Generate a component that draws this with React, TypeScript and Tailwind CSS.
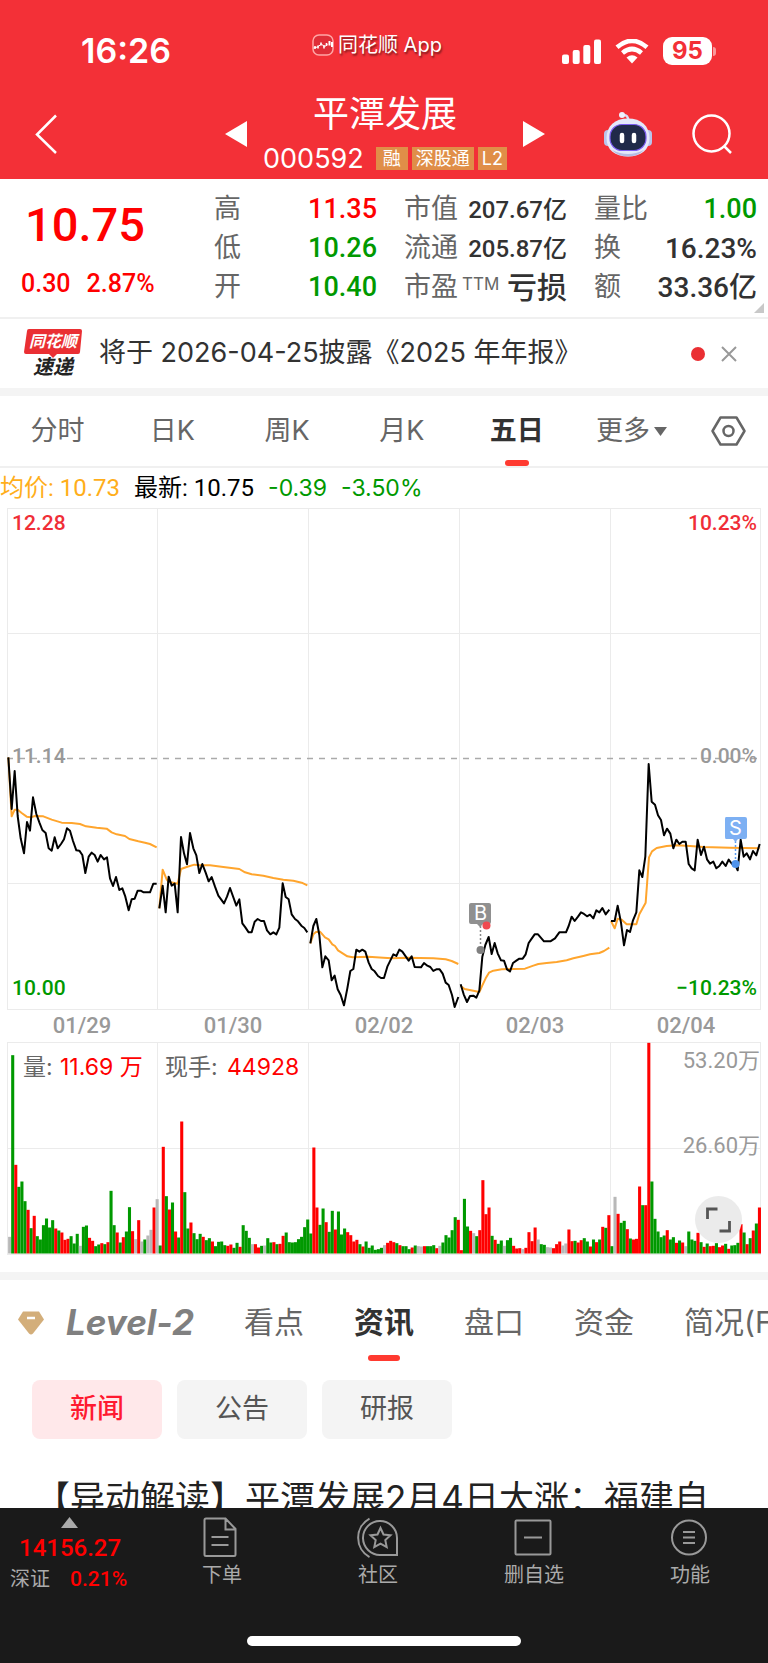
import React, { useState } from 'react';

interface Stat {
  label: string;
  sup?: string;
  value: string;
  className: string;
}

const STATS: Stat[][] = [
  [
    { label: '高', value: '11.35', className: 'text-[27px] text-[#ff0000]' },
    { label: '低', value: '10.26', className: 'text-[27px] text-[#009900]' },
    { label: '开', value: '10.40', className: 'text-[27px] text-[#009900]' },
  ],
  [
    { label: '市值', value: '207.67亿', className: 'text-[24px] text-[#323232]' },
    { label: '流通', value: '205.87亿', className: 'text-[24px] text-[#323232]' },
    { label: '市盈', sup: 'TTM', value: '亏损', className: 'text-[30px] text-[#323232]' },
  ],
  [
    { label: '量比', value: '1.00', className: 'text-[27px] text-[#009900]' },
    { label: '换', value: '16.23%', className: 'text-[28px] text-[#323232]' },
    { label: '额', value: '33.36亿', className: 'text-[28px] text-[#323232]' },
  ],
];

const PERIODS = ['分时', '日K', '周K', '月K', '五日', '更多'];
const SECTIONS = ['看点', '资讯', '盘口', '资金', '简况(F10)'];
const CHIPS = ['新闻', '公告', '研报'];
const DATES = ['01/29', '01/30', '02/02', '02/03', '02/04'];
const COLS = [7.5, 157.5, 308.5, 459.5, 610.5, 760.5];

// one entry per trading day, drawn at three units per pixel
const DAYS = [
  {
    x: 0,
    price:
      '25,52 35,207 44,93 53,228 62,295 72,340 81,246 90,272 99,172 109,222 118,247 127,270 137,279 146,325 155,332 164,292 173,325 183,312 192,298 201,265 210,272 219,303 229,331 238,332 247,345 256,399 266,350 275,338 284,345 293,365 302,345 312,358 321,352 330,415 339,438 348,411 358,450 367,445 376,470 386,511 395,478 404,476 413,452 422,452 431,457 450,457 460,431 470,431',
    avg: '25,52 35,229 44,209 53,209 65,219 80,230 92,232 105,228 130,229 155,239 185,248 215,249 240,252 258,259 290,263 320,266 335,277 350,283 375,288 388,297 415,304 435,308 450,312 470,322',
  },
  {
    x: 0,
    price:
      '478,505 488,437 497,517 506,410 515,437 524,431 533,517 543,291 552,340 561,373 570,279 580,325 589,346 598,399 607,372 617,398 626,424 635,411 645,440 655,467 672,490 681,470 690,444 709,497 718,478 727,550 736,562 746,577 755,577 764,545 773,537 783,543 792,543 801,571 811,583 820,577 829,583 838,563 848,430 857,471 866,478 875,523 885,537 894,544 904,557 913,564 922,577',
    avg: '478,505 488,389 500,418 506,426 520,428 533,431 543,387 560,381 583,374 600,376 630,376 670,381 718,387 735,397 755,403 790,407 820,414 850,419 880,422 905,428 922,436',
  },
  {
    x: 300,
    price:
      '31,610 40,558 49,537 58,585 67,682 76,649 86,661 95,721 104,707 113,748 122,765 132,796 142,745 151,693 160,687 169,629 178,635 187,629 196,635 206,668 215,687 224,694 234,708 243,714 252,714 262,680 280,643 289,648 298,629 307,635 326,662 335,649 344,681 363,682 372,669 382,677 391,681 400,693 409,688 419,688 428,701 437,728 446,735 456,765 464,801 475,771',
    avg: '31,610 40,583 48,576 60,575 75,592 86,598 97,613 105,618 114,631 142,649 158,652 205,650 250,653 275,655 320,653 400,655 437,658 455,663 475,672',
  },
  {
    x: 300,
    price:
      '482,733 491,763 501,786 510,768 520,767 529,773 538,752 547,650 556,615 566,591 575,642 584,609 593,640 603,661 612,662 621,688 630,694 639,669 649,662 658,656 668,656 677,643 686,609 695,596 704,583 714,583 732,604 751,604 765,595 778,577 798,577 806,558 815,530 824,543 834,530 843,517 852,522 861,529 870,524 880,535 889,511 898,517 907,504 917,523 928,509',
    avg: '482,738 494,747 520,752 538,756 547,736 557,715 567,698 580,692 605,688 640,687 675,686 700,677 715,672 740,669 770,666 800,661 820,655 850,648 870,643 898,639 912,633 928,623',
  },
  {
    x: 530,
    price:
      '243,543 254,543 263,497 273,548 282,616 291,570 300,576 309,541 319,517 328,391 337,411 346,350 356,72 365,185 375,194 384,226 393,240 402,286 411,266 421,281 430,325 439,299 448,312 457,305 467,305 476,372 485,385 494,391 503,299 513,345 522,320 531,358 540,371 550,365 559,385 568,378 577,365 587,378 596,359 606,372 614,371 623,391 632,299 641,350 650,340 660,358 669,333 679,346 689,312',
    avg: '243,543 254,565 263,536 275,539 290,553 319,553 328,523 347,488 352,420 357,352 366,334 380,324 410,318 440,316 480,318 520,321 600,323 689,325',
  },
];

// traded volume per 5 minutes: r = up, g = down, x = flat
const VOLUME = `
x50 g595 r266 g200 g216 g157 r131 g76 r113 g52 g42 g85 g105 g78 g100 r75 g69 r63 r41 r44 g52 g30 g59 x23 g80
g84 r47 r38 g22 g27 r31 g28 r34 g188 g85 r63 g33 r49 g66 g139 r67 x43 r100 x36 g42 x54 x71 r138 x163
g24 r320 g172 r132 g153 r66 g48 r396 g184 g75 r93 g61 g43 g59 r50 g40 g46 r36 g22 g35 g36 g25 r23 r27 g17
g32 r20 g85 g68 g47 x28 r28 r18 g23 x24 g46 g33 r34 g28 r29 r53 g63 g34 g33 g34 g43 g50 g79 g102
g60 r318 r138 g86 g135 r94 g65 g128 r72 g126 g57 g75 r64 r55 r36 r41 g28 r21 g36 g17 g24 g11 g13 g17 x25
r32 r38 r34 g31 r25 g22 g22 g13 r18 g24 x22 x21 r22 g22 g22 g25 r16 x23 g33 g55 g48 g70 g109 r101
r10 g164 g81 r68 x61 g52 r70 r220 r118 r138 g53 r41 g29 g39 x23 g40 g47 r23 r15 r16 x13 r17 r64 r37 r78
x42 g28 g26 x19 x18 r16 r28 r36 x24 x30 r72 r37 g38 r33 r40 g46 g36 r21 g42 r34 g42 r80 g77 r115
g22 x170 r119 g92 g98 r73 g45 r42 r44 r201 g145 r145 r632 g216 g104 g66 g49 g54 r70 g42 g49 r32 g39 r33 x22
g66 g42 g38 r62 g34 r20 g30 r22 r23 g31 r19 r24 g29 r14 g24 g25 g32 r88 g63 r28 g46 r69 g90 r138`
  .trim()
  .split(/\s+/)
  .map((item) => ({ kind: item[0], size: Number(item.slice(1)) }));

const BAR_COLORS: Record<string, string> = { r: '#ff0000', g: '#009900', x: '#b8b8b8' };

const StatusBar: React.FC = () => (
  <div className="flex h-[88px] items-center justify-between pr-[52px] pl-[81px] pt-[14px]">
    <div className="flex items-center">
      <span className="w-[231px] text-[34px] leading-[40px] font-semibold">16:26</span>
      <div className="flex items-center gap-1 pb-3 text-[20px] leading-[28px] [text-shadow:1px_2px_2px_rgba(0,0,0,0.5)]">
        <svg className="size-[22px]" viewBox="0 0 22 22" fill="none">
          <rect x="1" y="1" width="20" height="20" rx="6" fill="#df2e38" stroke="#ffa5a5" strokeWidth="1.500" />
          <path d="M3 12v3M6 14.500v-3M9 11.500v-3M12 14.500V11M14.500 12V9" stroke="#fff" strokeWidth="1.600" />
          <path d="M1.500 14l4-1 4-3 3 3 3-3" stroke="#fff" />
          <path d="M17.500 7v4.500M20 8v5" stroke="#fff" strokeWidth="2" />
        </svg>
        <span>同花顺 App</span>
      </div>
    </div>
    <div className="flex items-center gap-[14px]">
      <svg className="h-[25px] w-[39px]" viewBox="0 0 39 25" fill="#fff">
        <rect x="0" y="15.500" width="7" height="9.500" rx="2" />
        <rect x="10.700" y="11" width="7" height="14" rx="2" />
        <rect x="21.300" y="6" width="7" height="19" rx="2" />
        <rect x="32" y="0.500" width="7" height="24.500" rx="2" />
      </svg>
      <svg className="h-[25px] w-[34px]" viewBox="0 0 34 25" fill="none">
        <path d="M2 8.200Q17-4.500 32 8.200" stroke="#fff" strokeWidth="4.600" />
        <path d="M7.500 14Q17 6 26.500 14" stroke="#fff" strokeWidth="4.600" />
        <path d="M11.500 18.600Q17 14 22.500 18.600L17 24.500Z" fill="#fff" />
      </svg>
      <div className="flex items-center gap-px">
        <span className="flex h-[28px] w-[49px] items-center justify-center rounded-[9px] bg-white text-[24px] font-bold text-[#f33037]">
          95
        </span>
        <span className="h-[9px] w-[3px] rounded-r-full bg-white/50" />
      </div>
    </div>
  </div>
);

const Robot: React.FC = () => (
  <svg className="h-[46px] w-[48px]" viewBox="0 0 48 46" fill="none">
    <path d="M18.500 4q6-1 6 7" stroke="#d9def5" strokeWidth="2.500" />
    <circle cx="18" cy="4" r="3" fill="#eef1ff" />
    <rect x="0" y="19" width="8" height="16" rx="4" fill="#b9c4ec" />
    <rect x="40" y="19" width="8" height="16" rx="4" fill="#b9c4ec" />
    <path d="M24 7.500C37 7.500 45.500 15 45.500 27S37 45.500 24 45.500 2.500 39 2.500 27 11 7.500 24 7.500z" fill="#e4e8fa" />
    <path d="M8 39q16 8 32 0-6 6.500-16 6.500T8 39" fill="#b4bde4" />
    <rect x="6" y="13.500" width="36" height="26" rx="12" fill="#202a49" stroke="#7b5cf0" strokeWidth="1.200" />
    <path d="M18 24v6M30 24v6" stroke="#fff" strokeWidth="4.500" strokeLinecap="round" />
  </svg>
);

const TitleBar: React.FC = () => (
  <div className="flex h-[91px] items-center justify-between pr-9 pl-[34px]">
    <button aria-label="返回" className="flex w-[132px]">
      <svg className="h-[40px] w-[24px]" viewBox="0 0 24 40" fill="none">
        <path d="M22 1.500L3 20.500L22 39" stroke="#fff" strokeWidth="2.500" />
      </svg>
    </button>
    <div className="flex items-center gap-4">
      <button aria-label="上一只">
        <svg className="h-[26px] w-[22px]" viewBox="0 0 22 26" fill="#fff">
          <path d="M22 0v26L0 13z" />
        </svg>
      </button>
      <div className="flex flex-col items-center pt-1">
        <h1 className="text-[36px] leading-[46px]">平潭发展</h1>
        <div className="flex items-center gap-1 leading-[44px]">
          <span className="pr-2 text-[27px]">000592</span>
          <span className="bg-[#e08e48] px-[7px] text-[18px] leading-[23px]">融</span>
          <span className="bg-[#e08e48] px-1 text-[18px] leading-[23px]">深股通</span>
          <span className="bg-[#e08e48] px-1 text-[18px] leading-[23px]">L2</span>
        </div>
      </div>
      <button aria-label="下一只">
        <svg className="h-[26px] w-[22px]" viewBox="0 0 22 26" fill="#fff">
          <path d="M0 0v26L22 13z" />
        </svg>
      </button>
    </div>
    <div className="flex w-[128px] items-center justify-between">
      <button aria-label="智能助手">
        <Robot />
      </button>
      <button aria-label="搜索">
        <svg className="size-[40px]" viewBox="0 0 40 40" fill="none" stroke="#fff" strokeWidth="2.500">
          <circle cx="19.500" cy="19.500" r="18" />
          <path d="M32 32l7 7" />
        </svg>
      </button>
    </div>
  </div>
);

const Quote: React.FC = () => (
  <section className="relative flex justify-between border-b-2 border-[#f0f0f0] pt-[11px] pr-[11px] pb-[9px] pl-[21px]">
    <div className="font-[Roboto] font-medium text-[#ff0000]">
      <div className="pl-1 text-[47px] leading-[70px]">10.75</div>
      <div className="flex gap-4 text-[25px] leading-[48px]">
        <span>0.30</span>
        <span>2.87%</span>
      </div>
    </div>
    <div className="flex gap-[27px]">
      {STATS.map((column) => (
        <dl key={column[0].label} className="w-[163px]">
          {column.map((stat) => (
            <div key={stat.label} className="flex h-[39px] items-center justify-between whitespace-nowrap">
              <dt className="flex text-[27px] text-[#666]">
                {stat.label}
                {stat.sup && <span className="pt-[7px] pl-1 text-[17px] leading-[20px]">{stat.sup}</span>}
              </dt>
              <dd className={`font-[Roboto,'Noto_Sans_CJK_SC'] font-medium ${stat.className}`}>{stat.value}</dd>
            </div>
          ))}
        </dl>
      ))}
    </div>
    <svg className="absolute right-1 bottom-1 size-[10px]" viewBox="0 0 10 10" fill="#c8c8c8">
      <path d="M10 0v10H0z" />
    </svg>
  </section>
);

const Notice: React.FC<{ onClose: () => void }> = ({ onClose }) => (
  <section className="flex h-[69px] items-center pr-[31px] pl-6">
    <div className="w-[58px] font-bold">
      <div className="relative text-center text-[16px] leading-[25px] text-white">
        <svg className="absolute inset-0 h-[29px] w-full" viewBox="0 0 58 29" fill="#ea2f33">
          <path d="M5 0h51q2 0 2 2l-2 21q0 2-2 2H33l-4 4-4-4H2q-2 0-2-2L3 2q0-2 2-2z" />
        </svg>
        <span className="relative italic">同花顺</span>
      </div>
      <div className="pt-px text-center text-[20px] leading-[24px] text-[#222] italic">速递</div>
    </div>
    <p className="flex-1 pl-[17px] text-[27px] text-[#323232]">
      将于 2026-04-25披露《2025 年年报》
    </p>
    <span className="mr-4 size-[14px] rounded-full bg-[#ea2f33]" />
    <button aria-label="关闭" onClick={onClose}>
      <svg className="size-[16px]" viewBox="0 0 16 16" stroke="#999" strokeWidth="2">
        <path d="M1 1l14 14M15 1L1 15" />
      </svg>
    </button>
  </section>
);

const PeriodTabs: React.FC = () => {
  const [active, setActive] = useState('五日');

  return (
    <nav className="flex h-[72px] items-stretch border-b-2 border-[#f0f0f0] pr-[22px]">
      {PERIODS.map((period) => (
        <button
          key={period}
          onClick={() => setActive(period)}
          className={
            period === active
              ? 'relative flex flex-1 items-center justify-center text-[27px] font-bold text-[#323232]'
              : 'relative flex flex-1 items-center justify-center text-[27px] text-[#666]'
          }
        >
          {period}
          {period === '更多' && (
            <svg className="ml-1 h-[9px] w-[13px]" viewBox="0 0 13 9" fill="#666">
              <path d="M0 0h13L6.500 9z" />
            </svg>
          )}
          {period === active && <span className="absolute bottom-0 h-[6px] w-6 rounded-[3px] bg-[#ff3a30]" />}
        </button>
      ))}
      <button aria-label="设置" className="flex w-[57px] items-center justify-end">
        <svg className="h-[30px] w-[35px]" viewBox="0 0 35 30" fill="none" stroke="#666" strokeWidth="2.500">
          <path d="M9.500 1.500h16L33.500 15l-8 13.500h-16L1.500 15z" strokeLinejoin="round" />
          <circle cx="17.500" cy="15" r="5" />
        </svg>
      </button>
    </nav>
  );
};

const Chart: React.FC = () => (
  <svg
    className="block h-auto w-full font-[Roboto,'Noto_Sans_CJK_SC'] text-[21px] font-medium"
    viewBox="0 508 768 764"
    fill="none"
  >
    <g stroke="#ebebeb">
      {COLS.map((x) => (
        <path key={x} d={`M${x} 508V1010M${x} 1042V1254`} />
      ))}
      <path d="M7 508.500H761M7 633.500H761M7 883.500H761M7 1009.500H761M7 1042.500H761M7 1148.500H761M7 1254.500H761" />
    </g>
    <path d="M7 758.500H757" stroke="#aaa" strokeWidth="1.500" strokeDasharray="6 6" />

    <text x="12" y="530" fill="#f02e37">12.28</text>
    <text x="757" y="530" fill="#f02e37" textAnchor="end">10.23%</text>
    <text x="12" y="763" fill="#999">11.14</text>
    <text x="757" y="763" fill="#999" textAnchor="end">0.00%</text>
    <text x="12" y="995" fill="#009900">10.00</text>
    <text x="757" y="995" fill="#009900" textAnchor="end">−10.23%</text>
    {DATES.map((date, i) => (
      <text key={date} x={82 + i * 151} y="1033" fill="#999" textAnchor="middle" className="text-[22px]">
        {date}
      </text>
    ))}

    {DAYS.map((day, i) => (
      <g key={DATES[i]} transform={`translate(${day.x} 740) scale(0.33333)`} strokeWidth="6" strokeLinejoin="round">
        <polyline points={day.avg} stroke="#ffa52d" />
        <polyline points={day.price} stroke="#000" />
      </g>
    ))}

    {/* buy marker */}
    <path d="M480.500 926v20" stroke="#888" strokeWidth="1.500" strokeDasharray="2 2" />
    <path d="M471 903h18q2 0 2 2v17q0 2-2 2h-6l-3 3-3-3h-6q-2 0-2-2v-17q0-2 2-2z" fill="#909090" />
    <circle cx="480.500" cy="950" r="4" fill="#808080" />
    <circle cx="486.500" cy="925.500" r="4" fill="#f04a50" />
    <text x="480.500" y="920" fill="#fff" textAnchor="middle" className="font-[Inter] text-[20px] font-normal">B</text>

    {/* sell marker */}
    <path d="M735.500 841v20" stroke="#5b9cf0" strokeWidth="1.500" strokeDasharray="2 2" />
    <path d="M726 817h19q2 0 2 2v18q0 2-2 2h-7l-2.500 3-2.500-3h-7q-1 0-1-2v-18q0-2 1-2z" fill="#7db0f3" />
    <circle cx="735.500" cy="864" r="4" fill="#4f93ec" />
    <text x="735.500" y="835" fill="#fff" textAnchor="middle" className="font-[Inter] text-[20px] font-normal">S</text>

    {VOLUME.map((bar, i) => (
      <rect
        key={i}
        x={8.100 + i * 3.073}
        y={1253.500 - bar.size / 3}
        width="3.073"
        height={bar.size / 3}
        fill={BAR_COLORS[bar.kind]}
      />
    ))}
    <g className="font-[Inter,'Noto_Sans_CJK_SC'] text-[23px] font-normal">
      <text x="23" y="1075" fill="#666">量:</text>
      <text x="60" y="1075" fill="#ff0000">11.69 万</text>
      <text x="165" y="1075" fill="#666">现手:</text>
      <text x="227" y="1075" fill="#ff0000">44928</text>
    </g>
    <g fill="#999" textAnchor="end" className="text-[22px] font-normal">
      <text x="760" y="1068">53.20万</text>
      <text x="760" y="1153">26.60万</text>
    </g>

    <circle cx="718.500" cy="1219.500" r="23.500" fill="#ebebeb" />
    <path d="M707.500 1219v-10h10M729.500 1221v10h-10" stroke="#555" strokeWidth="2.800" />
  </svg>
);

const InfoTabs: React.FC = () => {
  const [active, setActive] = useState('资讯');

  return (
    <nav className="flex h-[85px] items-stretch gap-[50px] overflow-hidden pl-[18px] whitespace-nowrap">
      <button className="flex items-center gap-[22px] text-[35px] font-bold text-[#808080] italic">
        <svg className="h-[24px] w-[26px]" viewBox="0 0 26 24">
          <path d="M5 0.500h16l5 8L15 22.500q-2 2-4 0L0 8.500z" fill="#d3ae7a" />
          <path d="M9 7h8" stroke="#fff" strokeWidth="2.500" />
        </svg>
        Level-2
      </button>
      {SECTIONS.map((section) => (
        <button
          key={section}
          onClick={() => setActive(section)}
          className={
            section === active
              ? 'relative flex items-center justify-center text-[30px] font-bold text-[#323232]'
              : 'relative flex items-center justify-center text-[30px] text-[#666]'
          }
        >
          {section}
          {section === active && <span className="absolute bottom-1 h-[6px] w-8 rounded-[3px] bg-[#ff3a30]" />}
        </button>
      ))}
    </nav>
  );
};

const News: React.FC = () => {
  const [chip, setChip] = useState('新闻');

  return (
    <section>
      <div className="flex gap-[15px] px-8 pt-[15px]">
        {CHIPS.map((name) => (
          <button
            key={name}
            onClick={() => setChip(name)}
            className={
              name === chip
                ? 'h-[59px] w-[130px] rounded-lg bg-[#ffe8ea] text-[27px] font-medium text-[#ff1a30]'
                : 'h-[59px] w-[130px] rounded-lg bg-[#f4f4f4] text-[27px] text-[#555]'
            }
          >
            {name}
          </button>
        ))}
      </div>
      <a href="#news" className="block px-[35px] pt-8 text-[35px] leading-[54px] whitespace-nowrap text-[#222]">
        【异动解读】平潭发展2月4日大涨：福建自
      </a>
    </section>
  );
};

const ACTIONS = [
  {
    label: '下单',
    icon: (
      <path d="M5 1.500h19.500l10 10.500v25.500q0 1.500-1.500 1.500H5q-1.500 0-1.500-1.500V3q0-1.500 1.500-1.500zM24.500 1.500V12.500h10M10.500 20h17M10.500 28h17" />
    ),
  },
  {
    label: '社区',
    icon: (
      <>
        <path d="M40 38H23.500A17 17 0 1 1 40 21z" />
        <path d="M12.500 1.500A22 22 0 0 0 12.500 40" />
        <path d="M23.500 11l3 6.500 7 .8-5.200 4.800 1.400 7-6.200-3.500-6.200 3.500 1.400-7-5.200-4.800 7-.8z" />
      </>
    ),
  },
  { label: '删自选', icon: <path d="M3.500 3.500h33q1 0 1 1v32q0 1-1 1h-33q-1 0-1-1v-32q0-1 1-1zM11 20.500h18" /> },
  {
    label: '功能',
    icon: (
      <>
        <circle cx="20" cy="20.500" r="17" />
        <path d="M14 15h12M14 20.500h12M14 26h12" />
      </>
    ),
  },
];

const BottomBar: React.FC = () => (
  <footer className="shrink-0 bg-[#1a1a1a] text-[#aaa]">
    <div className="flex h-[128px] items-start pt-[9px]">
      <div className="flex w-[144px] flex-col pl-[10px]">
        <svg className="ml-[51px] h-[11px] w-[17px]" viewBox="0 0 17 11" fill="#aaa">
          <path d="M8.500 0L17 11H0z" />
        </svg>
        <span className="pt-[3px] pl-[9px] font-[Roboto] text-[24px] leading-[34px] font-medium text-[#ff0000]">
          14156.27
        </span>
        <span className="flex gap-5 text-[20px] leading-[28px]">
          深证
          <span className="font-[Roboto] text-[21px] font-medium text-[#ff0000]">0.21%</span>
        </span>
      </div>
      {ACTIONS.map((action) => (
        <button key={action.label} className="flex flex-1 flex-col items-center">
          <svg className="size-[42px]" viewBox="0 0 42 42" fill="none" stroke="#999" strokeWidth="2">
            {action.icon}
          </svg>
          <span className="text-[20px] leading-[32px]">{action.label}</span>
        </button>
      ))}
    </div>
    <div className="flex h-[27px] justify-center">
      <span className="h-[10px] w-[274px] rounded-full bg-white" />
    </div>
  </footer>
);

const App: React.FC = () => {
  const [showNotice, setShowNotice] = useState(true);

  return (
    <div className="flex h-screen flex-col bg-white font-[Inter,'Noto_Sans_CJK_SC',sans-serif]">
      <header className="shrink-0 bg-[#f33037] text-white">
        <StatusBar />
        <TitleBar />
      </header>
      <main className="min-h-0 flex-1 overflow-hidden">
        <Quote />
        {showNotice && <Notice onClose={() => setShowNotice(false)} />}
        <div className="h-2 bg-[#f4f4f4]" />
        <PeriodTabs />
        <div className="flex h-[40px] items-center gap-[14px] font-[Roboto,'Noto_Sans_CJK_SC'] text-[24px]">
          <span className="text-[#ffae1a]">均价: 10.73</span>
          <span className="text-black">最新: 10.75</span>
          <span className="font-[Inter] text-[23px] text-[#009900]">-0.39</span>
          <span className="font-[Inter] text-[23px] text-[#009900]">-3.50%</span>
        </div>
        <Chart />
        <div className="h-2 bg-[#f4f4f4]" />
        <InfoTabs />
        <News />
      </main>
      <BottomBar />
    </div>
  );
};

export default App;
